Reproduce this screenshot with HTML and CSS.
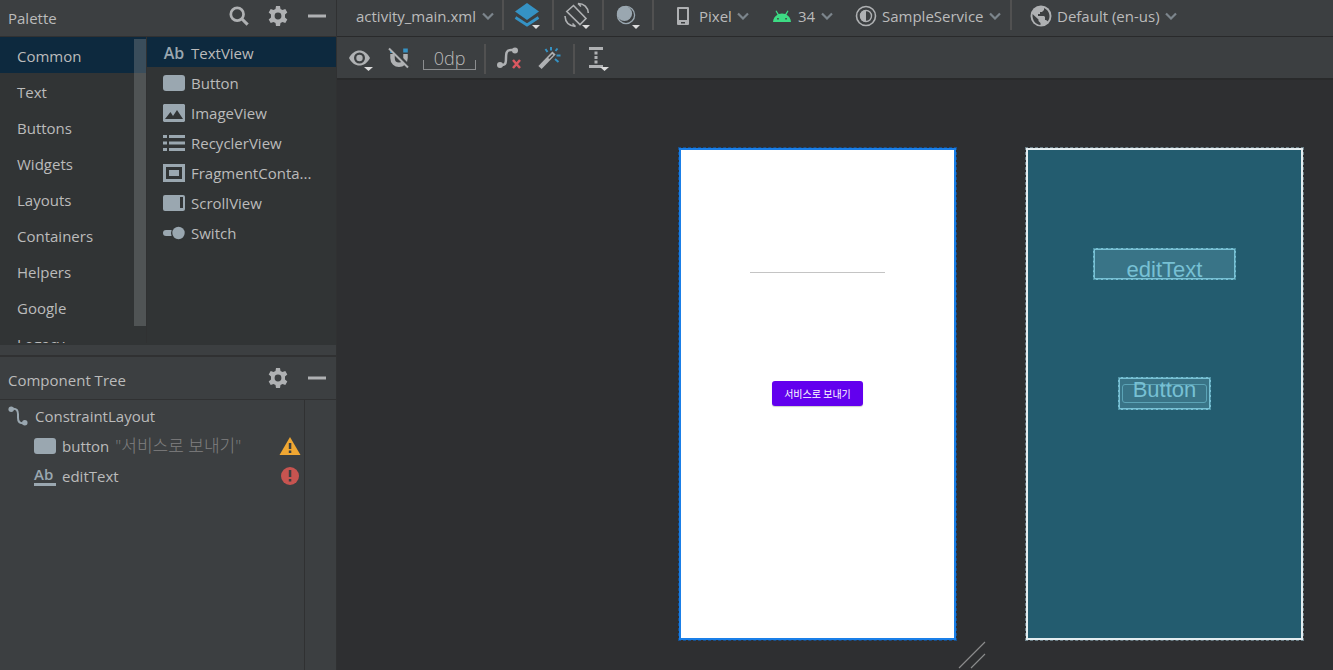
FILE: index.html
```html
<!DOCTYPE html>
<html lang="en">
<head>
  <meta charset="UTF-8">
  <title>activity_main.xml</title>
  <link rel="stylesheet" href="styles.css">
</head>
<body>
  <svg class="sprite" aria-hidden="true">
    <symbol id="chevron" viewBox="0 0 12 8"><path d="M1 1.500l5 5 5-5" fill="none" stroke="#7c858c" stroke-width="2.200"/></symbol>
    <symbol id="gear" viewBox="0 0 20 20">
      <path fill="#afb1b3" fill-rule="evenodd" d="M8 0h4l.5 3 2 1.100 2.800-1.100 2 3.500-2.300 1.900v3.200l2.300 1.900-2 3.500-2.800-1.100-2 1.100-.5 3H8l-.5-3-2-1.100L2.700 17l-2-3.500L3 11.600V8.400L.7 6.500l2-3.500 2.800 1.100 2-1.100zM10 6.600a3.400 3.400 0 1 0 0 6.800 3.400 3.400 0 0 0 0-6.800z"/>
    </symbol>
    <symbol id="minus" viewBox="0 0 20 20"><path fill="#afb1b3" d="M1 8.500h18v3H1z"/></symbol>
    <symbol id="box" viewBox="0 0 22 20"><rect y="2" width="22" height="16" rx="3" fill="#9aa7b0"/></symbol>
  </svg>

  <div class="editor">
    <aside class="sidebar">
      <section class="palette">
        <header class="panel-header">
          <h2>Palette</h2>
          <div class="actions">
            <button aria-label="Search"><svg viewBox="0 0 22 22"><circle cx="9" cy="9" r="7" fill="none" stroke="#afb1b3" stroke-width="3"/><path d="M14 14l6.500 6.500" stroke="#afb1b3" stroke-width="3.400"/></svg></button>
            <button aria-label="Settings"><svg><use href="#gear"/></svg></button>
            <button aria-label="Hide"><svg><use href="#minus"/></svg></button>
          </div>
        </header>
        <div class="palette-body">
          <ul class="categories">
            <li><button class="selected">Common</button></li>
            <li><button>Text</button></li>
            <li><button>Buttons</button></li>
            <li><button>Widgets</button></li>
            <li><button>Layouts</button></li>
            <li><button>Containers</button></li>
            <li><button>Helpers</button></li>
            <li><button>Google</button></li>
            <li><button>Legacy</button></li>
          </ul>
          <ul class="components">
            <li><button class="selected"><span class="ab">Ab</span>TextView</button></li>
            <li><button><svg><use href="#box"/></svg>Button</button></li>
            <li><button><svg viewBox="0 0 22 20"><path fill="#9aa7b0" fill-rule="evenodd" d="M1 1h20l1 1v16l-1 1H1l-1-1V2zM2 16h18l-6-9-4 6-2.500-4z"/></svg>ImageView</button></li>
            <li><button><svg viewBox="0 0 22 20"><path fill="#9aa7b0" d="M0 2h4v3H0zM6 2h16v3H6zM0 8.500h4v3H0zM6 8.500h16v3H6zM0 15h4v3H0zM6 15h16v3H6z"/></svg>RecyclerView</button></li>
            <li><button><svg viewBox="0 0 22 20"><path fill="#9aa7b0" fill-rule="evenodd" d="M0 1h22v18H0zM3 4v12h16V4zM6 7h10v6H6z"/></svg>FragmentConta...</button></li>
            <li><button><svg viewBox="0 0 22 20"><rect y="2" width="22" height="16" rx="2" fill="#9aa7b0"/><path fill="#313435" d="M17 4h3v11h-3z"/></svg>ScrollView</button></li>
            <li><button><svg viewBox="0 0 22 20"><rect y="7" width="12" height="6" rx="3" fill="#9aa7b0"/><circle cx="15.500" cy="10" r="7.500" fill="#313435"/><circle cx="15.500" cy="10" r="6.200" fill="#9aa7b0"/></svg>Switch</button></li>
          </ul>
          <div class="scroll-thumb"></div>
        </div>
      </section>

      <section class="tree">
        <header class="panel-header">
          <h2>Component Tree</h2>
          <div class="actions">
            <button aria-label="Settings"><svg><use href="#gear"/></svg></button>
            <button aria-label="Hide"><svg><use href="#minus"/></svg></button>
          </div>
        </header>
        <div class="tree-body">
          <ul class="nodes">
            <li class="root"><svg viewBox="0 0 22 22"><path d="M3 3h3c3 0 5 2 5 6v4c0 4 2 6 5 6h3" fill="none" stroke="#9aa7b0" stroke-width="2.200"/><circle cx="3.500" cy="3.500" r="3" fill="#9aa7b0"/><circle cx="18.500" cy="18.500" r="3" fill="#9aa7b0"/></svg>ConstraintLayout</li>
            <li><svg><use href="#box"/></svg>button <span class="value">"서비스로 보내기"</span>
              <svg class="issue" viewBox="0 0 22 20"><path fill="#f0a732" d="M11 1l10.500 18H.5z"/><path fill="#3c3f41" d="M9.800 7h2.500v6H9.800zM9.800 14.500h2.500V17H9.800z"/></svg></li>
            <li><span class="ab underlined">Ab</span>editText
              <svg class="issue" viewBox="0 0 22 20"><circle cx="11" cy="10" r="9" fill="#c75450"/><path fill="#3c3f41" d="M9.800 4h2.500v7H9.800zM9.800 13h2.500v2.500H9.800z"/></svg></li>
          </ul>
        </div>
      </section>
    </aside>

    <main class="design">
      <div class="toolbar toolbar-main">
        <label class="picker file"><select aria-label="File"><option>activity_main.xml</option></select><svg class="chevron"><use href="#chevron"/></svg></label>
        <button class="tool divided" aria-label="Design surface"><svg viewBox="0 0 26 28"><path fill="#3592c4" d="M13 1l12 8.500L13 18 1 9.500z"/><path d="M1.500 15.500L13 23l11.500-7.500" fill="none" stroke="#3592c4" stroke-width="2.800"/><path fill="#dcdcdc" d="M18 23h8l-4 4z"/></svg></button>
        <button class="tool divided" aria-label="Orientation"><svg viewBox="0 0 26 28"><g fill="none" stroke="#afb1b3" stroke-width="1.600"><path d="M9.500 3.500L22 16.500l-6 6L2.800 9.500z"/><path d="M14 1.500c6 0 10 4 10.300 9.500M1 14c.3 6 4 10 10.500 10.500M14 1.500l3 3M11.500 24.500l-3-3"/></g><path fill="#dcdcdc" d="M18 23h8l-4 4z"/></svg></button>
        <button class="tool divided" aria-label="Night mode"><svg viewBox="0 0 26 28"><circle cx="12" cy="13" r="8.600" fill="none" stroke="#9aa7b0" stroke-width="1.300"/><circle cx="10.500" cy="11.500" r="7.600" fill="#9aa7b0"/><path fill="#dcdcdc" d="M18 23h8l-4 4z"/></svg></button>
        <label class="picker divided"><svg viewBox="0 0 22 22"><path fill="#afb1b3" fill-rule="evenodd" d="M6 2h10q1 0 1 1v16q0 1-1 1H6q-1 0-1-1V3q0-1 1-1zM7 4v11h8V4zM9 17v1.500h4V17z"/></svg><select aria-label="Device"><option>Pixel</option></select><svg class="chevron"><use href="#chevron"/></svg></label>
        <label class="picker"><svg viewBox="0 0 22 22"><path fill="#3ddc84" fill-rule="evenodd" d="M2 17c.3-3.500 2-6 4.500-7.300L4.500 6l1-.6 2.200 3.700a10 10 0 0 1 6.600 0l2.200-3.700 1 .6-2 3.700C18 11 19.700 13.500 20 17zM6.200 13v1.500h1.500V13zM14.300 13v1.500h1.500V13z"/></svg><select aria-label="API level"><option>34</option></select><svg class="chevron"><use href="#chevron"/></svg></label>
        <label class="picker"><svg viewBox="0 0 22 22"><circle cx="11" cy="11" r="9.500" fill="none" stroke="#afb1b3" stroke-width="1.600"/><circle cx="11" cy="11" r="5.500" fill="none" stroke="#afb1b3" stroke-width="1.400"/><path fill="#afb1b3" d="M11 5a6 6 0 0 0 0 12z"/></svg><select aria-label="Theme"><option>SampleService</option></select><svg class="chevron"><use href="#chevron"/></svg></label>
        <label class="picker divided locale"><svg viewBox="0 0 22 22"><circle cx="11" cy="11" r="10.500" fill="#afb1b3"/><path fill="#3c3f41" d="M2.500 9l6 5.500v1.500l2 2v2C6 19.500 2 16 2.500 9zM14 3c2 .8 5.500 3.500 5.500 8 0 2-.5 4-2 5.500-.5-1-1-1.500-2.500-1.500v-3l-1-1H8V9h2V7h2l2-2z"/></svg><select aria-label="Locale"><option>Default (en-us)</option></select><svg class="chevron"><use href="#chevron"/></svg></label>
      </div>

      <div class="toolbar toolbar-layout">
        <button class="tool" aria-label="View options"><svg viewBox="0 0 26 28"><path fill="#afb1b3" fill-rule="evenodd" d="M0 14c5-10 16-10 21 0-5 10-16 10-21 0zM10.500 8.500a5.500 5.500 0 1 0 0 11 5.500 5.500 0 0 0 0-11z"/><circle cx="10.500" cy="14" r="3.200" fill="#afb1b3"/><path fill="#dcdcdc" d="M15 23h9l-4.500 4z"/></svg></button>
        <button class="tool" aria-label="Autoconnect"><svg viewBox="0 0 26 28"><path d="M4.500 10v4c0 9 13 9 13 0v-4" fill="none" stroke="#afb1b3" stroke-width="4.500"/><path fill="#3592c4" d="M15.200 4.500h4.600v4h-4.600zM2.200 6h3v3h-3z"/><path d="M3 4l19 19" stroke="#3c3f41" stroke-width="3"/><path d="M1 4.500l19 19" stroke="#afb1b3" stroke-width="2"/></svg></button>
        <button class="margin-value">0dp</button>
        <button class="tool divided" aria-label="Clear constraints"><svg viewBox="0 0 26 28"><path d="M4 21h2c4 0 4-3 4-7s0-8 5-8h3" fill="none" stroke="#afb1b3" stroke-width="2.500"/><circle cx="4" cy="21" r="3" fill="#afb1b3"/><circle cx="19" cy="6.500" r="3" fill="#afb1b3"/><path d="M17 16l7 8M24 16l-7 8" stroke="#db5860" stroke-width="2.500"/></svg></button>
        <button class="tool" aria-label="Infer constraints"><svg viewBox="0 0 26 28"><path d="M2 23.500L16 9" stroke="#afb1b3" stroke-width="4.500"/><path d="M10.800 14.500l4-4" stroke="#3c3f41" stroke-width="1.500"/><path d="M7.500 5l2 3M13 3v3.500M19.500 4.500l-2 2.500M18.500 11.500h4M17 15l3.500 3" stroke="#3592c4" stroke-width="2"/></svg></button>
        <button class="tool divided" aria-label="Guidelines"><svg viewBox="0 0 26 28"><path fill="#afb1b3" d="M4 3h14v3H4zM4 21h14v3H4zM9.500 7.500h3v3h-3zM9.500 12h3v3h-3zM9.500 16.500h3v3h-3z"/><path fill="#dcdcdc" d="M15 23h9l-4.500 4z"/></svg></button>
      </div>

      <div class="surface">
        <div class="screen preview">
          <div class="slot edit"><input type="text" aria-label="editText"></div>
          <div class="slot action"><button>서비스로 보내기</button></div>
        </div>
        <div class="screen blueprint">
          <div class="slot edit">editText</div>
          <div class="slot action"><span>Button</span></div>
        </div>
        <svg class="resize-handle" viewBox="0 0 28 28"><path d="M1 27L27 1M13 27l14-14" stroke="#8a8b8c" stroke-width="1.200"/></svg>
      </div>
    </main>
  </div>
</body>
</html>
```

FILE: styles.css
```css
:root {
  --panel: #3c3f41;
  --list: #313435;
  --line: #303132;
  --selected: #0d293e;
  --text: #bbbbbb;
  --icon: #9aa7b0;
  --blueprint: #235c6f;
  --blueprint-line: #77c0d4;
}
* {
  box-sizing: border-box;
}
body {
  margin: 0;
  font: 15px/20px "Open Sans", "Noto Sans CJK KR", sans-serif;
  background: var(--panel);
  color: var(--text);
}
ul {
  list-style: none;
  margin: 0;
  padding: 0;
}
h2 {
  margin: 0;
  font-size: 15px;
  font-weight: normal;
}
button, select {
  background: none;
  border: none;
  border-radius: 0;
  padding: 0;
  color: inherit;
  font: inherit;
}
svg {
  display: block;
  flex: none;
}
.sprite {
  position: absolute;
  width: 0;
  height: 0;
}
.editor {
  display: flex;
  height: 100vh;
  overflow: hidden;
}

/* left side */
.sidebar {
  display: flex;
  flex-direction: column;
  flex: none;
  width: 337px;
  border-right: 1px solid var(--line);
}
.panel-header {
  display: flex;
  align-items: center;
  justify-content: space-between;
  height: 37px;
  padding: 0 9px 4px 8px;
  border-bottom: 1px solid var(--line);
}
.panel-header h2 {
  padding-top: 3px;
}
.actions {
  display: flex;
  gap: 19px;
}
.actions svg {
  width: 20px;
  height: 20px;
}
.palette {
  border-bottom: 2px solid var(--line);
}
.palette-body {
  display: flex;
  position: relative;
  height: 308px;
  margin-bottom: 10px;
  padding-bottom: 2px;
  background: var(--list);
  overflow: hidden;
}
.categories {
  width: 147px;
  border-right: 1px solid var(--line);
  overflow: hidden;
}
.categories button {
  width: 100%;
  height: 36px;
  padding: 2px 17px 0;
  text-align: left;
}
.components {
  flex: 1;
}
.components button {
  display: flex;
  align-items: center;
  gap: 6px;
  width: 100%;
  height: 30px;
  padding: 2px 16px 0;
}
.components svg, .nodes svg {
  width: 22px;
  height: 20px;
}
.selected {
  background: var(--selected);
}
.ab {
  width: 22px;
  color: var(--icon);
  font-size: 16px;
  font-weight: 600;
}
.underlined {
  border-bottom: 3px solid var(--icon);
  font-size: 15px;
  line-height: 17px;
}
.scroll-thumb {
  position: absolute;
  top: 2px;
  left: 134px;
  width: 12px;
  height: 287px;
  background: rgba(128, 132, 134, 0.4);
}
.tree {
  display: flex;
  flex-direction: column;
  flex: 1;
}
.tree .panel-header {
  height: 43px;
  padding-bottom: 0;
}
.tree-body {
  flex: 1;
  padding-right: 31px;
}
.nodes {
  height: 100%;
  padding-top: 1px;
  border-right: 1px solid var(--line);
}
.nodes li {
  display: flex;
  align-items: center;
  gap: 6px;
  height: 30px;
  padding: 0 3px 0 34px;
}
.nodes .root {
  padding-left: 7px;
}
.nodes .value {
  color: #808080;
  font-size: 17px;
  font-weight: 300;
}
.nodes .issue {
  margin-left: auto;
}

/* toolbars */
.design {
  display: flex;
  flex-direction: column;
  flex: 1;
  min-width: 0;
}
.toolbar {
  display: flex;
  flex: none;
  border-bottom: 1px solid #292a2b;
}
.toolbar-main {
  height: 37px;
}
.toolbar-layout {
  align-items: center;
  height: 43px;
  padding-left: 8px;
  border-bottom-width: 2px;
}
.tool {
  display: flex;
  width: 39px;
  padding-left: 4px;
}
.tool svg {
  width: 26px;
  height: 28px;
}
.divided {
  position: relative;
}
.divided::before {
  content: "";
  position: absolute;
  left: 0;
  top: 0;
  width: 2px;
  height: 30px;
  background: #515151;
}
.tool.divided {
  width: 50px;
  padding-left: 12px;
}
.toolbar-main .tool {
  padding-top: 2px;
}
.picker {
  display: flex;
  align-items: center;
  gap: 5px;
  height: 32px;
  padding: 0 2px 1px 20px;
}
.picker.file {
  padding: 0 8px 1px 19px;
}
.picker.locale {
  margin-left: 7px;
}
.picker svg {
  width: 22px;
  height: 22px;
}
.picker .chevron {
  width: 12px;
  height: 8px;
}
.picker select {
  appearance: none;
}
.margin-value {
  position: relative;
  width: 53px;
  height: 24px;
  margin-right: 8px;
  font-size: 18px;
  font-weight: 300;
  line-height: 24px;
}
.margin-value::after {
  content: "";
  position: absolute;
  left: 0;
  right: 0;
  bottom: 0;
  height: 9px;
  border: 1px solid #8b8d8f;
  border-top: none;
}

/* canvas */
.surface {
  display: flex;
  align-items: flex-start;
  gap: 70px;
  position: relative;
  flex: 1;
  padding: 68px 30px 0 342px;
  background: #2e2f31;
}
.screen {
  display: flex;
  flex-direction: column;
  align-items: center;
  gap: 97px;
  flex: 1;
  height: 492px;
  padding-top: 98px;
  border: 2px solid #1a7fe8;
}
.preview {
  background: #fff;
  outline: 1px dashed #174f8c;
}
.blueprint {
  background: var(--blueprint);
  border-color: #e4edf0;
  outline: 1px dashed #6d8088;
}
.slot {
  display: flex;
  align-items: center;
  justify-content: center;
}
.edit {
  width: 143px;
  height: 32px;
}
.action {
  width: 93px;
  height: 33px;
}
.preview .edit {
  align-items: flex-start;
}
.preview input {
  width: 135px;
  height: 25px;
  padding: 0;
  background: none;
  border: none;
  border-bottom: 1px solid #c4c4c4;
}
.preview button {
  width: 91px;
  height: 25px;
  border-radius: 3px;
  background: #6200ee;
  box-shadow: 0 1px 1px rgba(0, 0, 0, 0.2);
  color: #fff;
  font: 10px/14px "Noto Sans CJK KR", sans-serif;
}
.blueprint .slot {
  background: #397487;
  border: 2px solid var(--blueprint-line);
  outline: 1px dashed #4f93a6;
  outline-offset: -1px;
  color: var(--blueprint-line);
  font: 22px/24px "Liberation Sans", Arial, sans-serif;
}
.blueprint .edit {
  padding-top: 12px;
}
.blueprint .action span {
  width: 85px;
  height: 19px;
  border: 1px solid #5ba3b6;
  border-radius: 3px;
  text-align: center;
  line-height: 10px;
}
.resize-handle {
  position: absolute;
  left: 621px;
  top: 561px;
  width: 28px;
  height: 28px;
}
```
